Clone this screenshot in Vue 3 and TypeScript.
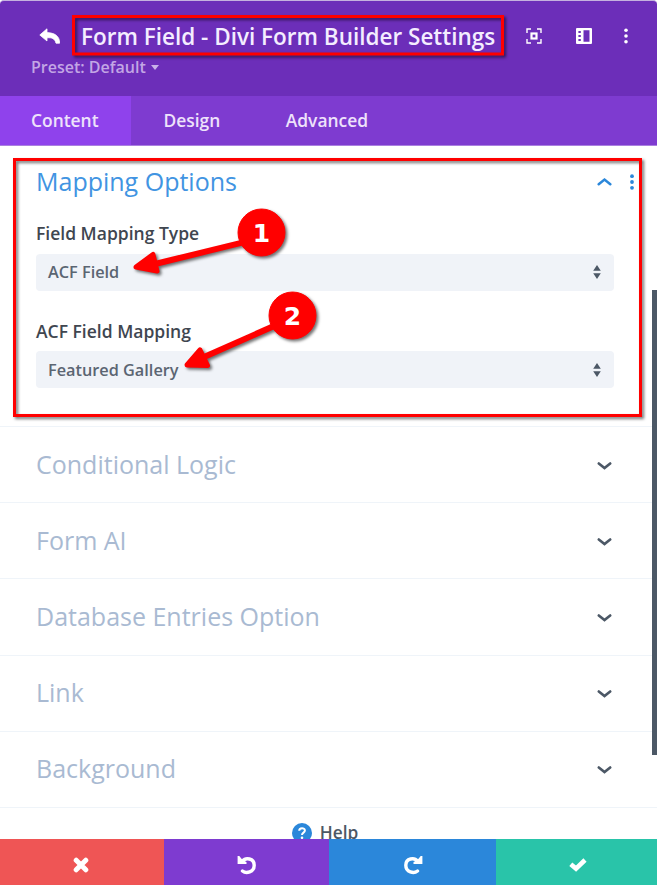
<script setup lang="ts">
interface Field {
  label: string
  value: string
}

const tabs: string[] = ['Content', 'Design', 'Advanced']
const fields: Field[] = [
  { label: 'Field Mapping Type', value: 'ACF Field' },
  { label: 'ACF Field Mapping', value: 'Featured Gallery' },
]
const sections: string[] = ['Conditional Logic', 'Form AI', 'Database Entries Option', 'Link', 'Background']
</script>

<template>
  <div class="panel">
    <header class="header">
      <div class="title-row">
        <svg class="back" width="21" height="17" viewBox="0 0 21 17">
          <path d="M8 0.8 0.8 7 8 13V9.800C13 9.400 15.800 10.500 17 15.200H20.600C20.800 8 15.500 4.800 8 4.600Z" fill="#fff" stroke="#fff" stroke-width="0.8" stroke-linejoin="round" />
        </svg>
        <h1 class="title">Form Field - Divi Form Builder Settings</h1>
        <div class="tools">
          <svg width="16" height="16" viewBox="0 0 16 16" fill="none" stroke="#fff">
            <path d="M1 5V1H5M11 1H15V5M15 11V15H11M5 15H1V11" stroke-width="1.4" />
            <rect x="5.5" y="5.5" width="5" height="5" stroke-width="2.2" />
          </svg>
          <svg width="16" height="16" viewBox="0 0 16 16">
            <path fill="#fff" fill-rule="evenodd" d="M1 0H15a1 1 0 0 1 1 1V15a1 1 0 0 1-1 1H1a1 1 0 0 1-1-1V1a1 1 0 0 1 1-1ZM7.500 2.300V13.700H13.500V2.300ZM2.400 3V5H4.800V3ZM2.400 7V9H4.800V7ZM2.400 11V13H4.800V11Z" />
          </svg>
          <svg class="menu" width="4" height="16" viewBox="0 0 4 16" fill="#fff">
            <circle cx="2" cy="2.200" r="1.800" /><circle cx="2" cy="8" r="1.800" /><circle cx="2" cy="13.800" r="1.800" />
          </svg>
        </div>
      </div>
      <div class="preset">
        <span>Preset: Default</span>
        <svg width="8" height="5" viewBox="0 0 8 5"><path d="M0 0H8L4 5Z" fill="#c9b1e9" /></svg>
      </div>
    </header>

    <nav class="tabs">
      <button v-for="(tab, i) in tabs" :key="tab" class="tab" :class="{ active: i === 0 }">{{ tab }}</button>
    </nav>

    <main class="body">
      <section class="mapping">
        <div class="mapping-head">
          <h2 class="section-title open">Mapping Options</h2>
          <svg class="chevron" width="16" height="10" viewBox="0 0 16 10" fill="none" stroke="#2b87da" stroke-width="2.5" stroke-linecap="round">
            <path d="M2.700 7.300 8.500 2.500 14.300 7.300" />
          </svg>
          <svg class="more" width="4" height="16" viewBox="0 0 4 16" fill="#2b87da">
            <circle cx="2" cy="2.200" r="1.900" /><circle cx="2" cy="8" r="1.900" /><circle cx="2" cy="13.800" r="1.900" />
          </svg>
        </div>
        <div v-for="field in fields" :key="field.label" class="field">
          <span class="label">{{ field.label }}</span>
          <div class="select">
            <span class="value">{{ field.value }}</span>
            <svg width="8" height="14" viewBox="0 0 8 14" fill="#4c5866">
              <path d="M0.200 5.800H7.800L4 0ZM0.200 8.200H7.800L4 14Z" />
            </svg>
          </div>
        </div>
      </section>

      <section v-for="name in sections" :key="name" class="section">
        <h2 class="section-title">{{ name }}</h2>
        <svg class="chevron" width="16" height="10" viewBox="0 0 16 10" fill="none" stroke="#4c5866" stroke-width="2.6" stroke-linecap="round">
          <path d="M2.800 3.500 8.500 8.100 14.200 3.500" />
        </svg>
      </section>

      <div class="help">
        <svg width="20" height="20" viewBox="0 0 20 20">
          <circle cx="10" cy="10" r="10" fill="#2b87da" />
          <path d="M7.200 7.700C7.200 4.300 12.900 4.400 12.900 7.500 12.900 9.700 10 9.500 10 12" fill="none" stroke="#fff" stroke-width="2" />
          <circle cx="10" cy="14.800" r="1.300" fill="#fff" />
        </svg>
        <span>Help</span>
      </div>
      <div class="scrollbar"></div>
    </main>

    <footer class="footer">
      <button class="action discard">
        <svg width="16" height="16" viewBox="0 0 16 16" stroke="#fff" stroke-width="5" stroke-linecap="round">
          <path d="M3.200 3.200 12.800 12.800M12.800 3.200 3.200 12.800" />
        </svg>
      </button>
      <button class="action undo">
        <svg width="20" height="20" viewBox="0 0 20 20">
          <path d="M5.500 6.100C8.500 2.200 17.200 3 17.200 10.200 17.200 17.500 9 18.800 5.500 16" fill="none" stroke="#fff" stroke-width="3.400" stroke-linecap="round" />
          <path d="M0.600 1V9H9.500V7L6.500 5.500 4.300 3.500 2.300 1Z" fill="#fff" />
        </svg>
      </button>
      <button class="action redo">
        <svg width="20" height="20" viewBox="0 0 20 20">
          <path d="M14.500 6.100C11.500 2.200 2.800 3 2.800 10.200 2.800 17.500 11 18.800 14.500 16" fill="none" stroke="#fff" stroke-width="3.400" stroke-linecap="round" />
          <path d="M19.400 1V9H10.500V7L13.500 5.500 15.700 3.500 17.700 1Z" fill="#fff" />
        </svg>
      </button>
      <button class="action save">
        <svg width="18" height="14" viewBox="0 0 18 14" fill="none" stroke="#fff" stroke-width="4.600">
          <path d="M1.800 6.200 7 10.600 16 2" />
        </svg>
      </button>
    </footer>

    <svg class="annotations" width="657" height="885" viewBox="0 0 657 885">
      <g class="marks" fill="none" stroke="#f00" stroke-width="3">
        <rect x="73.500" y="16.500" width="429" height="37.500" />
        <rect x="14.500" y="159.500" width="626" height="256" />
      </g>
      <g class="marks" fill="#f00" stroke="#f00" stroke-linejoin="round">
        <path d="M155 264 261 238" stroke-width="6" />
        <path d="M136 267 153 254.500 157 271Z" stroke-width="5" />
        <circle cx="261.500" cy="232.500" r="23.500" />
        <path d="M204 357 292 318" stroke-width="6" />
        <path d="M187 365 200 350 207.500 365.500Z" stroke-width="5" />
        <circle cx="292.500" cy="315.500" r="23.500" />
      </g>
      <g class="digits">
        <text x="261.500" y="241.500">1</text>
        <text x="292.500" y="324.500">2</text>
      </g>
    </svg>
  </div>
</template>

<style>
body {
  margin: 0;
}
</style>

<style scoped>
.panel {
  position: relative;
  display: flex;
  flex-direction: column;
  width: 657px;
  height: 885px;
  overflow: hidden;
  background: #fff;
  font-family: 'Open Sans', sans-serif;
}
.header {
  box-sizing: border-box;
  height: 96px;
  padding: 14px 29px 0 39px;
  border-top: 1px solid #c5b1df;
  border-radius: 4px 4px 0 0;
  background: #6c2eb9;
}
.title-row {
  display: flex;
  align-items: center;
  height: 42px;
}
.back {
  margin-right: 21px;
}
.title {
  margin: 0;
  padding-top: 1px;
  color: #f4edff;
  font-size: 22.500px;
  font-weight: 600;
  line-height: 30px;
  white-space: nowrap;
}
.tools {
  display: flex;
  align-items: center;
  gap: 34px;
  margin-left: auto;
}
.menu {
  margin-left: -2px;
}
.preset {
  display: flex;
  align-items: center;
  gap: 5px;
  height: 21px;
  margin-left: -8px;
  color: #c3a6e5;
  font-size: 16px;
  font-weight: 600;
  line-height: 21px;
}
.tabs {
  display: flex;
  box-sizing: border-box;
  height: 50px;
  border-bottom: 1px solid #aa80df;
  background: #7e3bd0;
}
button {
  margin: 0;
  padding: 0;
  border: 0;
  background: none;
  font-family: inherit;
}
.tab {
  padding: 0 32.500px 2px 33px;
  color: #eee2fb;
  font-size: 17.400px;
  font-weight: 600;
}
.tab.active {
  padding: 0 32px 2px 31px;
  background: #8f42ec;
}
.body {
  position: relative;
  flex: 1;
  min-height: 0;
  overflow: hidden;
}
.mapping {
  box-sizing: border-box;
  height: 281px;
  padding: 17px 15px 0 36px;
  border-bottom: 1px solid #eff4f9;
}
.mapping-head {
  display: flex;
  align-items: center;
  height: 38px;
  margin-bottom: 20px;
}
.section-title {
  margin: 0;
  padding-bottom: 1px;
  color: #a9bad2;
  font-size: 25px;
  font-weight: 400;
  line-height: 37px;
  white-space: nowrap;
}
.section-title.open {
  color: #4194e2;
}
.chevron {
  margin-left: auto;
}
.more {
  margin-left: 18px;
  margin-right: 8px;
}
.field {
  display: flex;
  flex-direction: column;
  width: 578px;
  height: 97.500px;
}
.label {
  height: 32.500px;
  color: #404650;
  font-size: 17.500px;
  font-weight: 600;
  line-height: 24px;
}
.select {
  display: flex;
  align-items: center;
  justify-content: space-between;
  height: 37px;
  padding: 0 13px 0 12px;
  border-radius: 4px;
  background: #f0f3f8;
}
.value {
  color: #5b6572;
  font-size: 16.300px;
  font-weight: 600;
}
.section {
  display: flex;
  align-items: center;
  box-sizing: border-box;
  height: 76.200px;
  padding: 0 45px 0 36px;
  border-bottom: 1px solid #eff4f9;
}
.help {
  display: flex;
  justify-content: center;
  gap: 8px;
  margin-top: 15px;
  padding-right: 7px;
  color: #4c5866;
  font-size: 17.300px;
  font-weight: 600;
  line-height: 20px;
}
.scrollbar {
  position: absolute;
  top: 143.500px;
  right: 0;
  width: 5px;
  height: 465px;
  background: #4c5866;
}
.footer {
  display: grid;
  grid-template-columns: 164.400px 165px 166.400px 161.200px;
  height: 45.600px;
}
.action {
  display: flex;
  align-items: center;
  justify-content: center;
  padding-top: 5px;
}
.discard { padding-right: 3px; background: #ef5555; }
.undo { background: #7e3bd0; }
.redo { background: #2b87da; }
.save { padding-left: 3px; background: #29c4a9; }
.annotations {
  position: absolute;
  top: 0;
  left: 0;
  pointer-events: none;
}
.marks {
  filter: drop-shadow(2px 2px 1.500px rgba(0, 0, 0, 0.55));
}
.digits {
  fill: #fff;
  font-family: 'DejaVu Sans', sans-serif;
  font-size: 25px;
  font-weight: 700;
  text-anchor: middle;
}
</style>
